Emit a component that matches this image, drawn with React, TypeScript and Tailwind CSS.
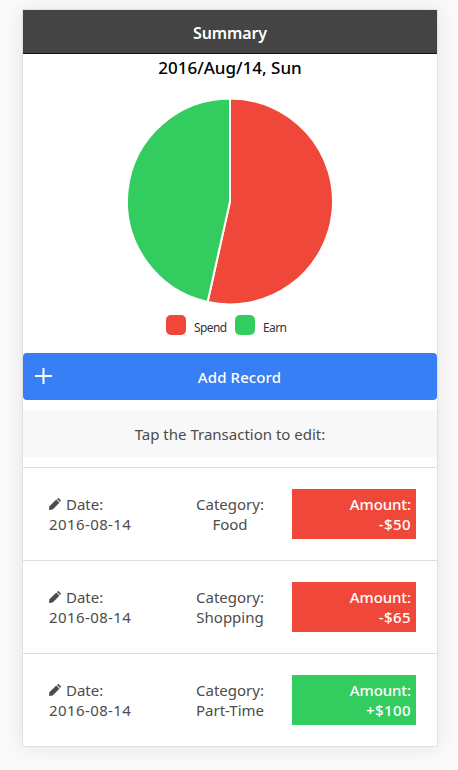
import clsx from "clsx";

type Transaction = {
  date: string;
  category: string;
  amount: number;
};

const transactions: Transaction[] = [
  { date: "2016-08-14", category: "Food", amount: -50 },
  { date: "2016-08-14", category: "Shopping", amount: -65 },
  { date: "2016-08-14", category: "Part-Time", amount: 100 },
];

const sum = (values: number[]) => values.reduce((a, b) => a + b, 0);

const spend = -sum(transactions.map((t) => Math.min(t.amount, 0)));
const earn = sum(transactions.map((t) => Math.max(t.amount, 0)));

function formatAmount(amount: number) {
  return `${amount < 0 ? "-" : "+"}$${Math.abs(amount)}`;
}

function PencilIcon() {
  return (
    <svg viewBox="0 0 12 12" className="mr-[5px] h-3 w-3 shrink-0" fill="currentColor">
      <path d="M0 12 .4 8.3 7.3 1.6 10.4 4.7 3.7 11.5Z" />
      <path d="M8 1 8.8.3Q9.3-.1 9.8.3L11.7 2.2Q12.1 2.7 11.7 3.2L11 4Z" />
    </svg>
  );
}

function PlusIcon() {
  return (
    <svg viewBox="0 0 17 16" className="absolute top-[15px] left-3 h-4 w-[17px]">
      <path d="M0 8H17M8.5 0V16" stroke="currentColor" strokeWidth="2" />
    </svg>
  );
}

function PieChart() {
  const angle = (spend / (spend + earn)) * Math.PI * 2;
  const x = 104 + 103 * Math.sin(angle);
  const y = 104.4 - 103 * Math.cos(angle);
  const large = angle > Math.PI ? 1 : 0;
  return (
    <svg viewBox="0 0 208 208" className="h-52 w-52" stroke="#fff" strokeWidth="2">
      <path
        d={`M104 104.4V1.4A103 103 0 ${large} 1 ${x} ${y}Z`}
        fill="#ef473a"
      />
      <path
        d={`M104 104.4L${x} ${y}A103 103 0 ${1 - large} 1 104 1.4Z`}
        fill="#33cd5f"
      />
    </svg>
  );
}

function Legend() {
  return (
    <div className="mt-[10px] flex h-5 justify-center gap-[7px] pr-2 text-xs text-[#333]">
      <div className="flex gap-2">
        <span className="h-5 w-5 rounded-[5px] bg-[#ef473a]" />
        <span className="w-[34px] pt-[3px] leading-5 tracking-[-0.6px]">Spend</span>
      </div>
      <div className="flex gap-2">
        <span className="h-5 w-5 rounded-[5px] bg-[#33cd5f]" />
        <span className="w-[23px] pt-[3px] leading-5 tracking-[-0.6px]">Earn</span>
      </div>
    </div>
  );
}

function TransactionRow({ date, category, amount }: Transaction) {
  return (
    <li className="grid h-[93px] grid-cols-3 border-t border-[#ddd] px-[21px] py-[21px] text-[#4c4c4c]">
      <div className="p-[5px]">
        <div className="flex items-center">
          <PencilIcon />
          <span>Date:</span>
        </div>
        <div className="tracking-[0.4px]">{date}</div>
      </div>
      <div className="p-[5px] text-center">
        <div>Category:</div>
        <div>{category}</div>
      </div>
      <div
        className={clsx(
          "p-[5px] text-right font-medium text-white",
          amount < 0 ? "bg-[#ef473a]" : "bg-[#33cd5f]",
        )}
      >
        <div className="tracking-[-0.1px]">Amount:</div>
        <div className="tracking-[0.4px]">{formatAmount(amount)}</div>
      </div>
    </li>
  );
}

export default function App() {
  return (
    <div className="h-[770px] bg-[#fafafa] pt-[10px] pr-[21px] pl-[23px] font-['Noto_Sans',sans-serif] text-[15px] leading-5">
      <main className="h-[736px] bg-white shadow-[0_0_0_1px_rgba(0,0,0,0.06),0_1px_20px_rgba(0,0,0,0.1)]">
        <header className="flex h-11 items-center justify-center border-b border-[#111] bg-[#444] pt-[2px] text-base font-semibold tracking-[-0.15px] text-white">
          <h1>Summary</h1>
        </header>
        <h2 className="pt-1 text-center text-[17px] leading-5 font-medium text-black">
          2016/Aug/14, Sun
        </h2>
        <div className="mt-[19px] flex justify-center">
          <PieChart />
        </div>
        <Legend />
        <button className="relative mt-[18px] flex h-[47px] w-full items-center justify-center rounded bg-[#387ef5] pl-[19px] font-medium tracking-[0.1px] text-white">
          <PlusIcon />
          Add Record
        </button>
        <p className="mt-[10px] h-[47px] bg-[#f8f8f8] pt-[14px] text-center text-[#4c4c4c]">
          Tap the Transaction to edit:
        </p>
        <ul className="mt-[10px]">
          {transactions.map((t) => (
            <TransactionRow key={t.category} {...t} />
          ))}
        </ul>
      </main>
    </div>
  );
}
